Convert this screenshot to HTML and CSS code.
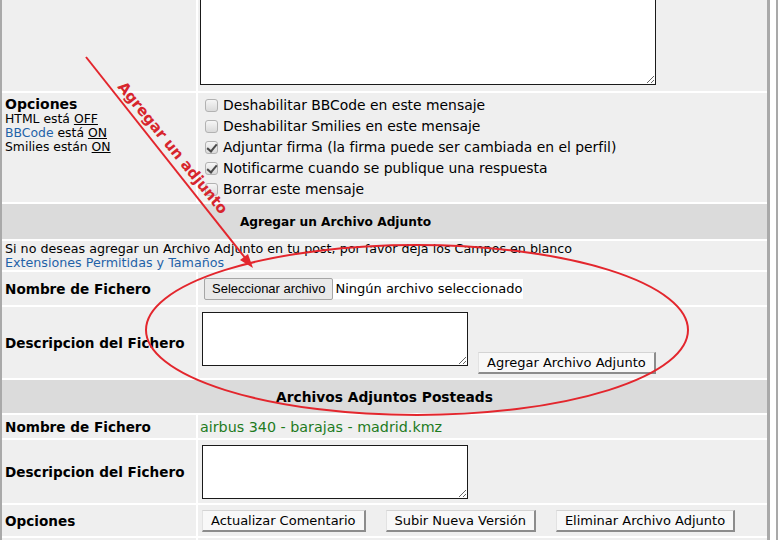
FILE: index.html
```html
<!DOCTYPE html>
<html lang="es">
<head>
    <meta charset="UTF-8">
    <meta name="viewport" content="width=device-width, initial-scale=1.0">
    <title>Publicar mensaje</title>
    <link rel="stylesheet" href="styles.css">
</head>
<body>
    <div class="frame">
        <table class="form">
            <tr class="r-msg">
                <td class="label"></td>
                <td class="field"><textarea class="msg-box"></textarea></td>
            </tr>
            <tr class="r-opts">
                <td class="label opts-label">
                    <div class="opts-title">Opciones</div>
                    <div class="opts-info">
                        HTML está <u>OFF</u><br>
                        <a href="#">BBCode</a> está <u>ON</u><br>
                        Smilies están <u>ON</u>
                    </div>
                </td>
                <td class="field">
                    <ul class="checks">
                        <li><span class="cb"></span>Deshabilitar BBCode en este mensaje</li>
                        <li><span class="cb"></span>Deshabilitar Smilies en este mensaje</li>
                        <li><span class="cb on"></span>Adjuntar firma (la firma puede ser cambiada en el perfil)</li>
                        <li><span class="cb on"></span>Notificarme cuando se publique una respuesta</li>
                        <li><span class="cb"></span>Borrar este mensaje</li>
                    </ul>
                </td>
            </tr>
            <tr class="r-cat">
                <th colspan="2" class="cat cat-add">Agregar un Archivo Adjunto</th>
            </tr>
            <tr class="r-info">
                <td colspan="2" class="info">
                    Si no deseas agregar un Archivo Adjunto en tu post, por favor deja los Campos en blanco<br>
                    <a href="#">Extensiones Permitidas y Tamaños</a>
                </td>
            </tr>
            <tr class="r-file">
                <td class="label">Nombre de Fichero</td>
                <td class="field">
                    <span class="file-btn">Seleccionar archivo</span><span class="file-name">Ningún archivo seleccionado</span>
                </td>
            </tr>
            <tr class="r-desc">
                <td class="label">Descripcion del Fichero</td>
                <td class="field">
                    <div class="desc-wrap">
                        <textarea class="desc-box"></textarea>
                        <button class="btn add-btn">Agregar Archivo Adjunto</button>
                    </div>
                </td>
            </tr>
            <tr class="r-cat2">
                <th colspan="2" class="cat cat-posted">Archivos Adjuntos Posteads</th>
            </tr>
            <tr class="r-name">
                <td class="label">Nombre de Fichero</td>
                <td class="field name-field"><span class="posted">airbus 340 - barajas - madrid.kmz</span></td>
            </tr>
            <tr class="r-desc2">
                <td class="label">Descripcion del Fichero</td>
                <td class="field"><textarea class="desc-box"></textarea></td>
            </tr>
            <tr class="r-actions">
                <td class="label">Opciones</td>
                <td class="field">
                    <div class="actions">
                        <button class="btn">Actualizar Comentario</button>
                        <button class="btn">Subir Nueva Versión</button>
                        <button class="btn">Eliminar Archivo Adjunto</button>
                    </div>
                </td>
            </tr>
            <tr class="r-more">
                <td class="label"></td>
                <td class="field"></td>
            </tr>
        </table>
    </div>

    <!-- anotación a mano alzada sobre el formulario -->
    <svg class="marks" width="780" height="540" viewBox="0 0 780 540">
        <line x1="86" y1="57" x2="246" y2="259" stroke="#e3262d" stroke-width="2"/>
        <polygon points="253,268 248,254 240,260" fill="#e3262d"/>
        <text class="mark-text" transform="translate(117 87) rotate(51)">Agregar un adjunto</text>
        <ellipse cx="417" cy="330" rx="271" ry="85" fill="none" stroke="#e3262d" stroke-width="2"/>
    </svg>
</body>
</html>
```

FILE: styles.css
```css
* {
    box-sizing: border-box;
}

body {
    margin: 0;
    height: 540px;
    overflow: hidden;
    position: relative;
    background: #fff;
    font-family: "DejaVu Sans", Verdana, sans-serif;
    font-size: 13px;
    color: #000;
}

a {
    color: #1f62a8;
    text-decoration: none;
}

.frame {
    width: 778px;
    margin-top: -40px;
    border-right: 2px solid #a9a9a9;
}

.form {
    width: 770px;
    border-collapse: separate;
    border-spacing: 0;
    border-left: 2px solid #a9a9a9;
    border-right: 3px solid #a9a9a9;
}

.form td,
.form th {
    background: #efefef;
    border-bottom: 2px solid #fff;
    padding: 0;
}

.label {
    width: 196px;
    border-right: 2px solid #fff;
    padding-left: 3px !important;
    font-weight: bold;
    font-size: 13.6px;
    vertical-align: middle;
}

.field {
    padding-left: 4px !important;
    vertical-align: middle;
}

/* alturas de fila */
.r-msg td { height: 133px; vertical-align: top; }
.r-opts td { height: 111px; vertical-align: top; }
.r-cat th { height: 37px; }
.r-info td { height: 31px; vertical-align: top; }
.r-file td { height: 35px; }
.r-desc td { height: 73px; }
.r-cat2 th { height: 35px; }
.r-name td { height: 25px; }
.r-desc2 td { height: 65px; }
.r-actions td { height: 33px; }
.r-more td { height: 2px; border-bottom: 0; }

.r-msg .field {
    padding: 25px 0 0 2px !important;
}

.msg-box {
    display: block;
    width: 456px;
    height: 100px;
    border: 1px solid #1a1a1a;
    background: #fff;
    margin: 0;
}

/* opciones */
.opts-label {
    padding-top: 3px !important;
}

.opts-title {
    font-size: 14px;
    line-height: 16px;
}

.opts-info {
    font-weight: normal;
    font-size: 12.4px;
    line-height: 14px;
}

.opts-info u {
    text-decoration: underline;
}

.checks {
    list-style: none;
    margin: 0;
    padding: 2px 0 0 3px;
}

.checks li {
    height: 21px;
    line-height: 21px;
    font-size: 13.9px;
    white-space: nowrap;
}

.cb {
    display: inline-block;
    width: 13px;
    height: 13px;
    margin-right: 5px;
    vertical-align: -2px;
    border: 1px solid #b2b2b2;
    border-radius: 3px;
    background: linear-gradient(#f6f6f6, #dadada);
    position: relative;
}

.cb.on::after {
    content: "";
    position: absolute;
    left: 3px;
    top: 0;
    width: 4px;
    height: 8px;
    border-right: 2px solid #4a4a4a;
    border-bottom: 2px solid #4a4a4a;
    transform: rotate(40deg);
}

/* cabeceras */
.cat {
    background: #dbdbdb !important;
    font-weight: bold;
    text-align: center;
    vertical-align: middle;
}

.cat-add {
    font-size: 12.2px;
    padding-right: 98px !important;
}

.cat-posted {
    font-size: 13.8px;
}

.info {
    padding: 1px 0 0 3px !important;
    font-size: 12.7px;
    line-height: 14px;
    white-space: nowrap;
}

/* selector de archivo */
.r-file .field {
    padding-left: 6px !important;
}

.file-btn {
    display: inline-block;
    height: 22px;
    line-height: 20px;
    padding: 0 7px;
    font-family: "Liberation Sans", Arial, sans-serif;
    font-size: 13px;
    background: #e9e9e9;
    border: 1px solid #a6a6a6;
    border-radius: 2px;
    vertical-align: middle;
}

.file-name {
    display: inline-block;
    height: 20px;
    line-height: 20px;
    padding: 0 1px 0 2px;
    background: #fff;
    vertical-align: middle;
}

.desc-wrap {
    display: flex;
    gap: 10px;
    align-items: flex-start;
}

.desc-box {
    display: block;
    width: 266px;
    height: 54px;
    margin: 0;
    border: 1px solid #1a1a1a;
    background: #fff;
}

.add-btn {
    margin-top: 40px;
}

.btn {
    height: 22px;
    padding: 0 8px;
    font-family: "DejaVu Sans", Verdana, sans-serif;
    font-size: 13px;
    color: #000;
    background: #f8f8f8;
    border-top: 1px solid #d4d4d4;
    border-left: 1px solid #e2e2e2;
    border-right: 2px solid #8c8c8c;
    border-bottom: 2px solid #8c8c8c;
    border-radius: 0;
    white-space: nowrap;
}

.name-field {
    padding-left: 2px !important;
}

.posted {
    color: #1e7b1e;
    font-size: 14.3px;
}

.actions {
    display: flex;
    gap: 20px;
}

/* anotaciones */
.marks {
    position: absolute;
    left: 0;
    top: 0;
    pointer-events: none;
}

.mark-text {
    font-family: "DejaVu Sans", Verdana, sans-serif;
    font-size: 15px;
    font-weight: bold;
    fill: #d7252c;
}
```
